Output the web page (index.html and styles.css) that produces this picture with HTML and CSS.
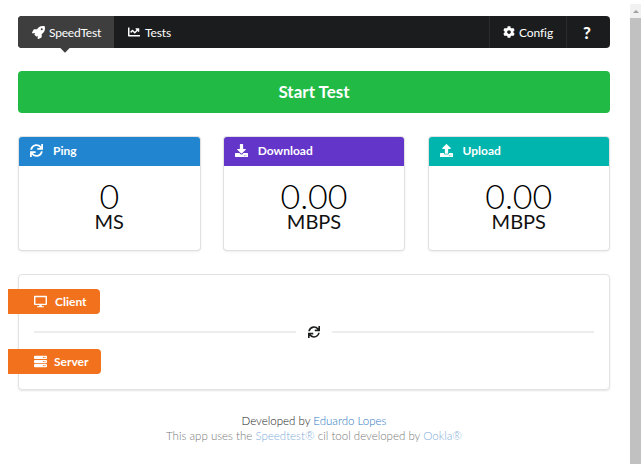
FILE: index.html
```html
<!DOCTYPE html>
<html lang="en">
<head>
<meta charset="utf-8">
<title>SpeedTest</title>
<link rel="stylesheet" href="styles.css">
</head>
<body>
<svg class="defs" width="0" height="0" aria-hidden="true">
  <symbol id="i-sync" viewBox="0 0 512 512"><path d="M440.65 12.57l4 82.77A247.16 247.16 0 0 0 255.83 8C134.73 8 33.91 94.92 12.29 209.82A12 12 0 0 0 24.09 224h49.05a12 12 0 0 0 11.67-9.26 175.91 175.91 0 0 1 317-56.94l-101.46-4.86a12 12 0 0 0-12.57 12v47.41a12 12 0 0 0 12 12H500a12 12 0 0 0 12-12V12a12 12 0 0 0-12-12h-47.37a12 12 0 0 0-11.98 12.57zM255.83 432a175.61 175.61 0 0 1-146-77.8l101.8 4.87a12 12 0 0 0 12.57-12v-47.4a12 12 0 0 0-12-12H12a12 12 0 0 0-12 12V500a12 12 0 0 0 12 12h47.35a12 12 0 0 0 12-12.6l-4.15-82.57A247.17 247.17 0 0 0 255.83 504c121.11 0 221.93-86.92 243.55-201.82a12 12 0 0 0-11.8-14.18h-49.05a12 12 0 0 0-11.67 9.26A175.86 175.86 0 0 1 255.83 432z"/></symbol>
</svg>
<div class="page">
  <main class="content">
    <nav class="menu">
      <a class="item active">
        <svg class="ic rocket" viewBox="0 0 512 512"><path d="M505.12 19.09c-1.19-5.53-6.66-11-12.21-12.19C460.72 0 435.51 0 410.41 0 307.18 0 245.27 55.2 199.05 128H94.84c-16.35.02-35.56 11.88-42.89 26.48L2.52 253.3A28.4 28.4 0 0 0 0 264a24 24 0 0 0 24 24h103.82l-22.48 22.47c-11.36 11.36-13 32.26 0 45.25l50.91 50.91c11.16 11.19 32.16 13.16 45.28 0l22.47-22.47V488a24 24 0 0 0 24 24 28.56 28.56 0 0 0 10.71-2.52l98.73-49.39c14.63-7.3 26.51-26.5 26.51-42.86V312.8c72.6-46.31 128.03-108.41 128.03-211.1.01-25.2.01-50.4-6.95-82.61zM384.04 168a40 40 0 1 1 40.01-40 40.02 40.02 0 0 1-40.01 40z"/></svg>
        SpeedTest
      </a>
      <a class="item">
        <svg class="ic" viewBox="0 0 512 512"><path d="M496 384H64V80c0-8.84-7.16-16-16-16H16C7.16 64 0 71.16 0 80v336c0 17.67 14.33 32 32 32h464c8.84 0 16-7.16 16-16v-32c0-8.84-7.16-16-16-16zM464 96H345.94c-21.38 0-32.09 25.85-16.97 40.97l32.4 32.4L288 242.75l-73.37-73.37c-12.5-12.5-32.76-12.5-45.25 0l-68.69 68.69c-6.25 6.25-6.25 16.38 0 22.63l22.62 22.62c6.25 6.25 16.38 6.25 22.63 0L192 237.25l73.37 73.37c12.5 12.5 32.76 12.5 45.25 0l96-96 32.4 32.4c15.12 15.12 40.97 4.41 40.97-16.97V112c0-8.84-7.16-16-16-16z"/></svg>
        Tests
      </a>
      <div class="right">
        <a class="item sep cfg">
          <svg class="ic" viewBox="0 0 512 512"><path d="M487.4 315.7l-42.6-24.6c4.3-23.2 4.3-47 0-70.2l42.6-24.6c4.9-2.8 7.1-8.6 5.5-14-11.1-35.6-30-67.8-54.7-94.6-3.8-4.1-10-5.1-14.8-2.3L380.8 110c-17.9-15.4-38.5-27.3-60.8-35.1V25.8c0-5.6-3.9-10.5-9.4-11.7-36.7-8.2-74.3-7.8-109.2 0-5.5 1.2-9.4 6.1-9.4 11.7V75c-22.2 7.9-42.8 19.8-60.8 35.1L88.7 85.5c-4.9-2.8-11-1.9-14.8 2.3-24.7 26.7-43.6 58.9-54.7 94.6-1.7 5.4.6 11.2 5.5 14L67.3 221c-4.3 23.2-4.3 47 0 70.2l-42.6 24.6c-4.9 2.8-7.1 8.6-5.5 14 11.1 35.6 30 67.8 54.7 94.6 3.8 4.1 10 5.1 14.8 2.3l42.6-24.6c17.9 15.4 38.5 27.3 60.8 35.1v49.2c0 5.6 3.9 10.5 9.4 11.7 36.7 8.2 74.3 7.8 109.2 0 5.5-1.2 9.4-6.1 9.4-11.7v-49.2c22.2-7.9 42.8-19.8 60.8-35.1l42.6 24.6c4.9 2.8 11 1.9 14.8-2.3 24.7-26.7 43.6-58.9 54.7-94.6 1.5-5.5-.7-11.3-5.6-14.1zM256 336c-44.1 0-80-35.9-80-80s35.9-80 80-80 80 35.9 80 80-35.9 80-80 80z"/></svg>
          Config
        </a>
        <a class="item sep help">?</a>
      </div>
    </nav>

    <button class="start" type="button">Start Test</button>

    <section class="cards">
      <article class="card">
        <header class="card-head blue"><svg class="ic big"><use href="#i-sync"/></svg>Ping</header>
        <div class="card-body"><div class="val">0</div><div class="unit">MS</div></div>
      </article>
      <article class="card">
        <header class="card-head violet">
          <svg class="ic big" viewBox="0 0 512 512"><path d="M216 0h80c13.3 0 24 10.7 24 24v168h87.7c17.8 0 26.7 21.5 14.1 34.1L269.7 378.3c-7.5 7.5-19.8 7.5-27.3 0L90.1 226.1c-12.6-12.6-3.7-34.1 14.1-34.1H192V24c0-13.3 10.7-24 24-24zm296 376v112c0 13.3-10.7 24-24 24H24c-13.3 0-24-10.7-24-24V376c0-13.3 10.7-24 24-24h146.7l49 49c20.1 20.1 52.5 20.1 72.6 0l49-49H488c13.3 0 24 10.7 24 24zm-124 88c0-11-9-20-20-20s-20 9-20 20 9 20 20 20 20-9 20-20zm64 0c0-11-9-20-20-20s-20 9-20 20 9 20 20 20 20-9 20-20z"/></svg>Download
        </header>
        <div class="card-body"><div class="val">0.00</div><div class="unit">MBPS</div></div>
      </article>
      <article class="card">
        <header class="card-head teal">
          <svg class="ic big" viewBox="0 0 512 512"><path d="M296 384h-80c-13.3 0-24-10.7-24-24V192h-87.7c-17.8 0-26.7-21.5-14.1-34.1L242.3 5.7c7.5-7.5 19.8-7.5 27.3 0l152.2 152.2c12.6 12.6 3.7 34.1-14.1 34.1H320v168c0 13.3-10.7 24-24 24zm216-8v112c0 13.3-10.7 24-24 24H24c-13.3 0-24-10.7-24-24V376c0-13.3 10.7-24 24-24h136v8c0 30.9 25.1 56 56 56h80c30.9 0 56-25.1 56-56v-8h136c13.3 0 24 10.7 24 24zm-124 88c0-11-9-20-20-20s-20 9-20 20 9 20 20 20 20-9 20-20zm64 0c0-11-9-20-20-20s-20 9-20 20 9 20 20 20 20-9 20-20z"/></svg>Upload
        </header>
        <div class="card-body"><div class="val">0.00</div><div class="unit">MBPS</div></div>
      </article>
    </section>

    <section class="segment">
      <div class="ribbon">
        <svg class="ic big" viewBox="0 0 576 512"><path d="M528 0H48C21.5 0 0 21.5 0 48v320c0 26.5 21.5 48 48 48h192l-16 48h-72c-13.3 0-24 10.7-24 24s10.7 24 24 24h272c13.3 0 24-10.7 24-24s-10.7-24-24-24h-72l-16-48h192c26.5 0 48-21.5 48-48V48c0-26.5-21.5-48-48-48zm-16 352H64V64h448v288z"/></svg>Client
      </div>
      <div class="divider"><svg class="ic swap"><use href="#i-sync"/></svg></div>
      <div class="ribbon server">
        <svg class="ic big" viewBox="0 0 512 512"><path d="M480 160H32c-17.7 0-32-14.3-32-32V64c0-17.7 14.3-32 32-32h448c17.7 0 32 14.3 32 32v64c0 17.7-14.3 32-32 32zm-48-88c-13.3 0-24 10.7-24 24s10.7 24 24 24 24-10.7 24-24-10.7-24-24-24zm-64 0c-13.3 0-24 10.7-24 24s10.7 24 24 24 24-10.7 24-24-10.7-24-24-24zm112 248H32c-17.7 0-32-14.3-32-32v-64c0-17.7 14.3-32 32-32h448c17.7 0 32 14.3 32 32v64c0 17.7-14.3 32-32 32zm-48-88c-13.3 0-24 10.7-24 24s10.7 24 24 24 24-10.7 24-24-10.7-24-24-24zm-64 0c-13.3 0-24 10.7-24 24s10.7 24 24 24 24-10.7 24-24-10.7-24-24-24zm112 248H32c-17.7 0-32-14.3-32-32v-64c0-17.7 14.3-32 32-32h448c17.7 0 32 14.3 32 32v64c0 17.7-14.3 32-32 32zm-48-88c-13.3 0-24 10.7-24 24s10.7 24 24 24 24-10.7 24-24-10.7-24-24-24zm-64 0c-13.3 0-24 10.7-24 24s10.7 24 24 24 24-10.7 24-24-10.7-24-24-24z"/></svg>Server
      </div>
    </section>

    <footer class="foot">
      <p>Developed by <a>Eduardo Lopes</a></p>
      <p class="dim">This app uses the <a>Speedtest®</a> cil tool developed by <a>Ookla®</a></p>
    </footer>
  </main>
  <aside class="scrollbar"><span class="arrow"></span></aside>
</div>
</body>
</html>
```

FILE: styles.css
```css
* { box-sizing: border-box; }
html, body { margin: 0; height: 100%; overflow: hidden; }
body { font-family: Lato, "Open Sans", sans-serif; font-size: 14px; color: rgba(0,0,0,.87); background: #fff; }
.defs { position: absolute; }
.page { display: flex; height: 464px; }
.content { width: 630px; padding: 16px 20px 0 18px; flex: none; }
.scrollbar { flex: none; width: 11px; margin-top: 4px; background: #c1c1c1; }
.arrow { display: block; height: 14px; background: #f1f1f1; position: relative; }
.arrow::after { content: ""; position: absolute; left: 3px; top: 6px; border: 3px solid transparent; border-top: 0; border-bottom: 3px solid #a0a0a0; }

.ic { width: 12px; height: 12px; fill: currentColor; flex: none; }
.rocket { width: 13px; height: 13px; margin-right: -1px; }

.menu { display: flex; height: 32px; background: #1b1c1d; border-radius: 4px; color: #fff; font-size: 12px; }
.item { display: flex; align-items: center; gap: 5px; height: 100%; padding: 0 14px; position: relative; letter-spacing: -.1px; }
.item.active { background: #3e3e3f; border-radius: 4px 0 0 4px; width: 96px; letter-spacing: -.2px; }
.item.active::after { content: ""; position: absolute; left: 43px; bottom: -3px; width: 8px; height: 8px; background: #3e3e3f; transform: rotate(45deg); }
.right { margin-left: auto; display: flex; }
.sep { border-left: 1px solid #2a2b2c; }
.cfg { width: 77px; gap: 4px; padding-right: 0; padding-left: 13px; }
.help { font-size: 17px; font-weight: 900; width: 44px; justify-content: center; padding: 0 3px 0 0; }

.start { display: block; width: 100%; height: 42px; margin-top: 23px; padding: 0 0 1px; border: 0; border-radius: 4px; background: #21ba45; color: #fff; font: 700 17px Lato, sans-serif; }

.cards { display: grid; grid-template-columns: repeat(3, 180.5px); justify-content: space-between; margin-top: 24px; padding: 0 1px; }
.card { height: 113px; border-radius: 3px; background: #fff; box-shadow: 0 1px 3px 0 #dcdcdd, 0 0 0 1px #e3e3e4; overflow: hidden; }
.card-head { display: flex; align-items: center; gap: 10px; height: 29px; padding: 0 0 2px 11px; color: #fff; font-size: 12px; font-weight: 700; }
.big { width: 13px; height: 13px; }
.blue { background: #2185d0; }
.violet { background: #6435c9; }
.teal { background: #00b5ad; }
.card-body { text-align: center; padding-top: 15px; color: #000; }
.val { font-size: 34px; font-weight: 300; line-height: 30px; }
.unit { font-size: 20px; line-height: 20px; color: #111; }

.segment { display: flex; flex-direction: column; height: 116px; margin-top: 24px; padding-top: 14px; border: 1px solid #e2e2e3; border-radius: 4px; box-shadow: 0 1px 2px 0 rgba(34,36,38,.12); position: relative; }
.ribbon { display: flex; align-items: center; gap: 8px; align-self: flex-start; width: 92px; height: 25px; margin-left: -11px; padding-left: 26px; background: #f2711c; color: #fff; border-radius: 0 4px 4px 0; font-size: 12px; font-weight: 700; }
.ribbon.server { width: 93px; gap: 7px; margin-top: 3px; }
.divider { display: flex; align-items: center; gap: 12px; height: 28px; margin: 4px 15px 0; }
.divider::before, .divider::after { content: ""; flex: 1; height: 2px; background: #eceded; }
.swap { width: 12px; height: 12px; color: #1b1c1d; }

.foot { margin-top: 23px; text-align: center; font-size: 11.5px; font-weight: 300; line-height: 15px; color: #222; }
.foot p { margin: 0; }
.foot a { color: #2f79c2; }
.dim { opacity: .62; }
```
